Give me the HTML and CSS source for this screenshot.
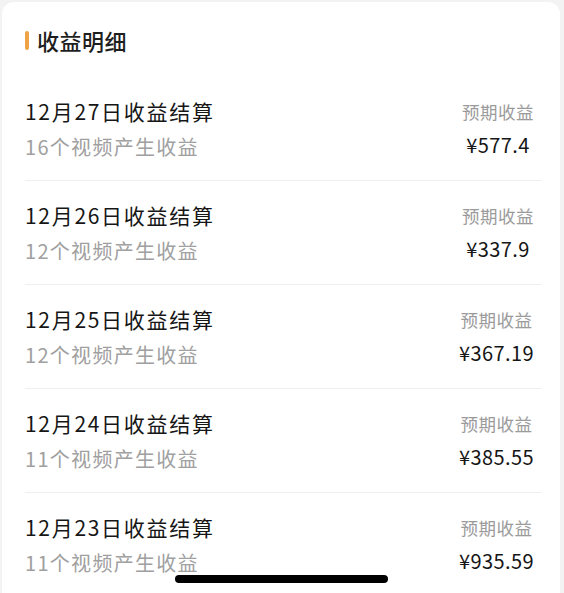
FILE: index.html
```html
<!DOCTYPE html>
<html lang="zh-CN">
<head>
<meta charset="utf-8">
<link rel="stylesheet" href="styles.css">
</head>
<body>
<div class="card">
  <div class="header">
    <span class="bar"></span>
    <span class="title">收益明细</span>
  </div>
  <div class="list">
    <div class="row">
      <div class="left">
        <div class="name">12月27日收益结算</div>
        <div class="sub">16个视频产生收益</div>
      </div>
      <div class="right">
        <div class="label">预期收益</div>
        <div class="amount">¥577.4</div>
      </div>
    </div>
    <div class="row">
      <div class="left">
        <div class="name">12月26日收益结算</div>
        <div class="sub">12个视频产生收益</div>
      </div>
      <div class="right">
        <div class="label">预期收益</div>
        <div class="amount">¥337.9</div>
      </div>
    </div>
    <div class="row">
      <div class="left">
        <div class="name">12月25日收益结算</div>
        <div class="sub">12个视频产生收益</div>
      </div>
      <div class="right">
        <div class="label">预期收益</div>
        <div class="amount">¥367.19</div>
      </div>
    </div>
    <div class="row">
      <div class="left">
        <div class="name">12月24日收益结算</div>
        <div class="sub">11个视频产生收益</div>
      </div>
      <div class="right">
        <div class="label">预期收益</div>
        <div class="amount">¥385.55</div>
      </div>
    </div>
    <div class="row last">
      <div class="left">
        <div class="name">12月23日收益结算</div>
        <div class="sub">11个视频产生收益</div>
      </div>
      <div class="right">
        <div class="label">预期收益</div>
        <div class="amount">¥935.59</div>
      </div>
    </div>
  </div>
  <div class="home-indicator"></div>
</div>
</body>
</html>
```
FILE: styles.css
```css
* { box-sizing: border-box; }
html, body {
  margin: 0;
  padding: 0;
  background: #f3f3f3;
  font-family: "Noto Sans CJK SC", "Noto Sans", sans-serif;
  color: #1c1c1c;
}
body {
  width: 564px;
  height: 593px;
  overflow: hidden;
  padding: 2px 4px 0 2px;
}
.card {
  position: relative;
  background: #ffffff;
  border-radius: 12px 12px 0 0;
  height: 591px;
  padding: 23px 18px 0 23px;
}
.header {
  display: flex;
  align-items: center;
  height: 30px;
  gap: 8px;
}
.bar {
  width: 4px;
  height: 19px;
  border-radius: 2px;
  background: #eea346;
}
.title {
  font-size: 22px;
  line-height: 30px;
  font-weight: 500;
  color: #1e1e1e;
  letter-spacing: 0.5px;
}
.list {
  margin-top: 22px;
}
.row {
  display: flex;
  justify-content: space-between;
  align-items: flex-start;
  padding: 19px 0 18px;
  border-bottom: 1px solid #efefef;
}
.row.last { border-bottom: none; }
.name {
  font-size: 21px;
  line-height: 30px;
  color: #161616;
  letter-spacing: 1.7px;
}
.sub {
  margin-top: 6px;
  font-size: 20px;
  line-height: 30px;
  color: #a0a0a0;
  letter-spacing: 1.3px;
}
.right {
  display: flex;
  flex-direction: column;
  align-items: center;
  margin-right: 8px;
  margin-top: 2px;
}
.label {
  font-size: 17.5px;
  line-height: 28px;
  color: #9b9b9b;
  letter-spacing: 0.5px;
}
.amount {
  margin-top: 5px;
  font-size: 20px;
  line-height: 28px;
  color: #161616;
  letter-spacing: 0.4px;
}
.home-indicator {
  position: absolute;
  left: 173px;
  top: 573px;
  width: 213px;
  height: 8px;
  border-radius: 4px;
  background: #000;
}
```
